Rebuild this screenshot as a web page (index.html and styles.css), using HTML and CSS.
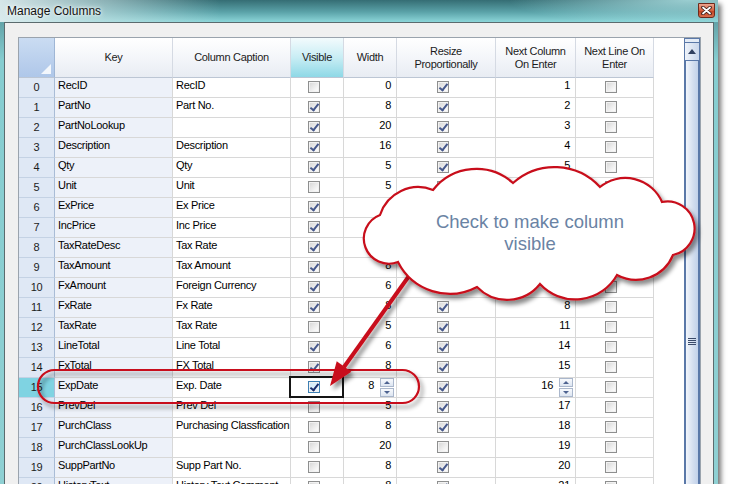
FILE: index.html
```html
<!DOCTYPE html>
<html>
<head>
	<title>Manage Columns</title>
	<link rel="stylesheet" href="styles.css">
</head>
<body>
	<div class="window">
		<div class="titlebar">
			<span class="title">Manage Columns</span>
			<span class="close">
				<svg width="11" height="9" viewBox="0 0 11 9">
					<path d="M2 1.5 L9 7.5 M9 1.5 L2 7.5" stroke="#3b1d16" stroke-width="3.6" stroke-linecap="round"/>
					<path d="M2 1.5 L9 7.5 M9 1.5 L2 7.5" stroke="#fff" stroke-width="1.8" stroke-linecap="round"/>
				</svg>
			</span>
		</div>
		<div class="panel">
			<div class="grid">
				<div class="cells">
					<table>
						<thead>
							<tr>
								<th class="corner w-rh"></th>
								<th class="w-key">Key</th>
								<th class="w-cap">Column Caption</th>
								<th class="w-vis sorted">Visible</th>
								<th class="w-wid">Width</th>
								<th class="w-res">Resize<br>Proportionally</th>
								<th class="w-nc">Next Column<br>On Enter</th>
								<th class="w-nl">Next Line On<br>Enter</th>
							</tr>
						</thead>
						<tbody>
							<tr><td class="rh">0</td><td class="key">RecID</td><td class="cap">RecID</td><td class="chk"><span class="cb"></span></td><td class="num">0</td><td class="chk"><span class="cb on"></span></td><td class="num">1</td><td class="chk"><span class="cb"></span></td></tr>
							<tr><td class="rh">1</td><td class="key">PartNo</td><td class="cap">Part No.</td><td class="chk"><span class="cb on"></span></td><td class="num">8</td><td class="chk"><span class="cb on"></span></td><td class="num">2</td><td class="chk"><span class="cb"></span></td></tr>
							<tr><td class="rh">2</td><td class="key">PartNoLookup</td><td class="cap"></td><td class="chk"><span class="cb on"></span></td><td class="num">20</td><td class="chk"><span class="cb on"></span></td><td class="num">3</td><td class="chk"><span class="cb"></span></td></tr>
							<tr><td class="rh">3</td><td class="key">Description</td><td class="cap">Description</td><td class="chk"><span class="cb on"></span></td><td class="num">16</td><td class="chk"><span class="cb on"></span></td><td class="num">4</td><td class="chk"><span class="cb"></span></td></tr>
							<tr><td class="rh">4</td><td class="key">Qty</td><td class="cap">Qty</td><td class="chk"><span class="cb on"></span></td><td class="num">5</td><td class="chk"><span class="cb on"></span></td><td class="num">5</td><td class="chk"><span class="cb"></span></td></tr>
							<tr><td class="rh">5</td><td class="key">Unit</td><td class="cap">Unit</td><td class="chk"><span class="cb"></span></td><td class="num">5</td><td class="chk"><span class="cb on"></span></td><td class="num"></td><td class="chk"><span class="cb"></span></td></tr>
							<tr><td class="rh">6</td><td class="key">ExPrice</td><td class="cap">Ex Price</td><td class="chk"><span class="cb on"></span></td><td class="num"></td><td class="chk"><span class="cb on"></span></td><td class="num"></td><td class="chk"><span class="cb"></span></td></tr>
							<tr><td class="rh">7</td><td class="key">IncPrice</td><td class="cap">Inc Price</td><td class="chk"><span class="cb on"></span></td><td class="num"></td><td class="chk"><span class="cb on"></span></td><td class="num"></td><td class="chk"><span class="cb"></span></td></tr>
							<tr><td class="rh">8</td><td class="key">TaxRateDesc</td><td class="cap">Tax Rate</td><td class="chk"><span class="cb on"></span></td><td class="num"></td><td class="chk"><span class="cb on"></span></td><td class="num"></td><td class="chk"><span class="cb"></span></td></tr>
							<tr><td class="rh">9</td><td class="key">TaxAmount</td><td class="cap">Tax Amount</td><td class="chk"><span class="cb on"></span></td><td class="num">8</td><td class="chk"><span class="cb on"></span></td><td class="num"></td><td class="chk"><span class="cb"></span></td></tr>
							<tr><td class="rh">10</td><td class="key">FxAmount</td><td class="cap">Foreign Currency</td><td class="chk"><span class="cb on"></span></td><td class="num">6</td><td class="chk"><span class="cb on"></span></td><td class="num"></td><td class="chk"><span class="cb"></span></td></tr>
							<tr><td class="rh">11</td><td class="key">FxRate</td><td class="cap">Fx Rate</td><td class="chk"><span class="cb on"></span></td><td class="num">8</td><td class="chk"><span class="cb on"></span></td><td class="num">8</td><td class="chk"><span class="cb"></span></td></tr>
							<tr><td class="rh">12</td><td class="key">TaxRate</td><td class="cap">Tax Rate</td><td class="chk"><span class="cb"></span></td><td class="num">5</td><td class="chk"><span class="cb on"></span></td><td class="num">11</td><td class="chk"><span class="cb"></span></td></tr>
							<tr><td class="rh">13</td><td class="key">LineTotal</td><td class="cap">Line Total</td><td class="chk"><span class="cb on"></span></td><td class="num">6</td><td class="chk"><span class="cb on"></span></td><td class="num">14</td><td class="chk"><span class="cb"></span></td></tr>
							<tr><td class="rh">14</td><td class="key">FxTotal</td><td class="cap">FX Total</td><td class="chk"><span class="cb on"></span></td><td class="num">8</td><td class="chk"><span class="cb on"></span></td><td class="num">15</td><td class="chk"><span class="cb"></span></td></tr>
							<tr>
								<td class="rh sel">15</td><td class="key">ExpDate</td><td class="cap">Exp. Date</td>
								<td class="chk cur"><span class="cb on focus"></span></td>
								<td class="num spin"><div class="spin-wrap"><span class="spin-val">8</span><span class="spinner"><i class="up"></i><i class="down"></i></span></div></td>
								<td class="chk"><span class="cb on"></span></td>
								<td class="num spin"><div class="spin-wrap"><span class="spin-val">16</span><span class="spinner"><i class="up"></i><i class="down"></i></span></div></td>
								<td class="chk"><span class="cb"></span></td>
							</tr>
							<tr><td class="rh">16</td><td class="key">PrevDel</td><td class="cap">Prev Del</td><td class="chk"><span class="cb"></span></td><td class="num">5</td><td class="chk"><span class="cb on"></span></td><td class="num">17</td><td class="chk"><span class="cb"></span></td></tr>
							<tr><td class="rh">17</td><td class="key">PurchClass</td><td class="cap">Purchasing Classfication</td><td class="chk"><span class="cb"></span></td><td class="num">8</td><td class="chk"><span class="cb on"></span></td><td class="num">18</td><td class="chk"><span class="cb"></span></td></tr>
							<tr><td class="rh">18</td><td class="key">PurchClassLookUp</td><td class="cap"></td><td class="chk"><span class="cb"></span></td><td class="num">20</td><td class="chk"><span class="cb"></span></td><td class="num">19</td><td class="chk"><span class="cb"></span></td></tr>
							<tr><td class="rh">19</td><td class="key">SuppPartNo</td><td class="cap">Supp Part No.</td><td class="chk"><span class="cb"></span></td><td class="num">8</td><td class="chk"><span class="cb on"></span></td><td class="num">20</td><td class="chk"><span class="cb"></span></td></tr>
							<tr><td class="rh">20</td><td class="key">HistoryText</td><td class="cap">History Text Comment</td><td class="chk"><span class="cb"></span></td><td class="num">8</td><td class="chk"><span class="cb on"></span></td><td class="num">21</td><td class="chk"><span class="cb"></span></td></tr>
						</tbody>
					</table>
				</div>
				<div class="vscroll">
					<div class="sb-cap"></div>
					<div class="sb-up"><span class="tri"></span></div>
					<div class="sb-thumb"><span class="grip"></span></div>
				</div>
			</div>
		</div>
	</div>

	<!-- annotations drawn over the dialog -->
	<svg class="notes" width="733" height="500" viewBox="0 0 733 500">
		<defs>
			<filter id="shadow" x="-10%" y="-10%" width="130%" height="140%">
				<feDropShadow dx="3" dy="4" stdDeviation="2.2" flood-color="#000" flood-opacity="0.45"/>
			</filter>
		</defs>
		<rect x="38" y="370" width="381" height="33" rx="16.5" class="red-line" filter="url(#shadow)"/>
		<g filter="url(#shadow)">
			<line x1="409" y1="276" x2="344" y2="367" class="arrow-line"/>
			<polygon points="330,386 351.3,371.7 336.7,361.2" class="arrow-head"/>
		</g>
		<path class="cloud" filter="url(#shadow)" d="M433,190 A55,55 0 0 1 513,183 A62,62 0 0 1 600,187 A40,40 0 0 1 662,202 A27,27 0 0 1 673,255 A40,40 0 0 1 617,275 A48,48 0 0 1 540,284 A42,42 0 0 1 477,287 A58,58 0 0 1 398,262 A25,25 0 0 1 380,215 A40,40 0 0 1 433,190 Z"/>
		<text x="530" y="228" class="cloud-text">Check to make column</text>
		<text x="530" y="250" class="cloud-text">visible</text>
	</svg>
</body>
</html>
```
FILE: styles.css
```css
/* Win7 style "Manage Columns" dialog */

* { box-sizing: border-box; }

body {
	margin: 0;
	background: #fff;
	font-family: "Liberation Sans", Arial, sans-serif;
}

.window {
	width: 718px;
	height: 484px;
	display: flex;
	flex-direction: column;
	background: linear-gradient(#4f8c92, #86cdd0 60px, #8fd0d3);
	box-shadow: 3px 4px 5px rgba(0, 0, 0, 0.55);
}

.titlebar {
	height: 22px;
	flex: none;
	display: flex;
	align-items: flex-start;
	justify-content: space-between;
	padding-left: 7px;
	background:
		radial-gradient(ellipse 180px 26px at 96% 0, rgba(180, 230, 232, 0.8), rgba(180, 230, 232, 0)),
		linear-gradient(to right, rgba(222, 236, 238, 0.95) 0, rgba(205, 228, 230, 0.55) 110px, rgba(205, 228, 230, 0) 220px),
		linear-gradient(#356d74, #5ba3a9 55%, #8cd6d9);
}

.title {
	font-size: 12px;
	line-height: 22px;
	color: #111;
	text-shadow: 0 0 6px #fff, 0 0 3px #fff;
}

.close {
	margin: 3px 3px 0 0;
	width: 17px;
	height: 15px;
	border: 1px solid #6e2a1c;
	border-radius: 0 0 3px 3px;
	background: linear-gradient(#eca48f, #d6613f 50%, #c1401f 52%, #d9704f);
	display: flex;
	align-items: center;
	justify-content: center;
}

.panel {
	flex: 1;
	margin: 0 4px;
	background: #f0f0f0;
	border: 1px solid #5b6b6e;
	border-bottom: none;
	padding: 14px 0 0 13px;
	overflow: hidden;
}

.grid {
	display: flex;
	width: 683px;
	height: 470px;
	border: 1px solid #9aa3ad;
	background: #fff;
}

.cells { width: 665px; }

table {
	border-collapse: separate;
	border-spacing: 0;
	table-layout: fixed;
	width: 635px;
	font-size: 11px;
	letter-spacing: -0.3px;
	color: #000;
}

th, td {
	border-right: 1px solid #d8d8d8;
	border-bottom: 1px solid #d8d8d8;
	padding: 0;
	overflow: hidden;
	white-space: nowrap;
}

.w-rh { width: 36px; }
.w-key { width: 118px; }
.w-cap { width: 118px; }
.w-vis { width: 53px; }
.w-wid { width: 53px; }
.w-res { width: 99px; }
.w-nc { width: 80px; }
.w-nl { width: 78px; }

thead th {
	height: 40px;
	background: linear-gradient(#fff, #f4f6fa 50%, #e8ecf3);
	border-right-color: #d5dae3;
	border-bottom-color: #bcc6d4;
	font-weight: normal;
	line-height: 13px;
	text-align: center;
	vertical-align: middle;
	color: #1b1b1b;
}

th.corner {
	position: relative;
	background: linear-gradient(#cadcf2, #afc7e9);
	border-right-color: #9fb6d5;
}

th.corner::after {
	content: '';
	position: absolute;
	right: 3px;
	bottom: 3px;
	border-left: 10px solid transparent;
	border-bottom: 10px solid #f3f7fc;
}

th.sorted { background: linear-gradient(#f3fbfd, #c8edf4 50%, #8ed8e6); }

tbody td {
	height: 20px;
	line-height: 14px;
	vertical-align: top;
}

td.rh {
	background: #dfe8f5;
	text-align: center;
	padding-top: 2px;
	border-right-color: #a9bcd6;
	border-bottom-color: #c4d2e4;
	color: #1c1c1c;
}

td.rh.sel { background: #7fd3e2; }

td.key {
	background: #edf1f9;
	padding-left: 3px;
}

td.cap { padding-left: 3px; }

td.num {
	text-align: right;
	padding-right: 5px;
}

td.chk { padding: 3px 7px 0 0; }

.cb {
	display: block;
	position: relative;
	margin: 0 auto;
	width: 12px;
	height: 12px;
	border: 1px solid #8e8f8f;
	background: linear-gradient(135deg, #d4d4d4, #f5f5f5 70%, #fff);
	box-shadow: inset 0 0 0 1px #f2f2f2;
}

.cb.on::after {
	content: '';
	position: absolute;
	left: 3px;
	top: 0;
	width: 3px;
	height: 7px;
	border: solid #46588c;
	border-width: 0 2px 2px 0;
	transform: rotate(38deg);
}

.cb.focus {
	border-color: #3d7fb3;
	background: linear-gradient(135deg, #cfe8f8, #eef8fe);
}

.cb.focus::after { border-color: #1b2c6c; }

/* current cell */
td.cur {
	position: relative;
	overflow: visible;
}

td.cur::after {
	content: '';
	position: absolute;
	left: -2px;
	top: -2px;
	right: -1px;
	bottom: -1px;
	border: 2px solid #151515;
}

td.spin { padding-right: 2px; }

.spin-wrap {
	display: flex;
	justify-content: flex-end;
	align-items: flex-start;
}

.spin-val { margin-right: 6px; }

.spinner {
	width: 14px;
	height: 19px;
	display: flex;
	flex-direction: column;
	gap: 1px;
}

.spinner i {
	flex: 1;
	border: 1px solid #aab7cc;
	background: linear-gradient(#f8fafd, #dde5f1);
	display: flex;
	align-items: center;
	justify-content: center;
}

.spinner i::after {
	content: '';
	border-left: 3px solid transparent;
	border-right: 3px solid transparent;
}

.spinner .up::after { border-bottom: 3px solid #4d6290; }
.spinner .down::after { border-top: 3px solid #4d6290; }

/* vertical scrollbar */
.vscroll {
	width: 16px;
	display: flex;
	flex-direction: column;
	background: #e8eef7;
}

.sb-cap {
	height: 5px;
	border: 1px solid #5a78a8;
	background: #e3ebf6;
}

.sb-up {
	height: 18px;
	border: 1px solid #5a78a8;
	border-top: none;
	background: linear-gradient(to right, #eef3fa, #c9d6eb);
	display: flex;
	align-items: center;
	justify-content: center;
}

.tri {
	border-left: 4px solid transparent;
	border-right: 4px solid transparent;
	border-bottom: 5px solid #2f3f5f;
}

.sb-thumb {
	flex: 1;
	display: flex;
	flex-direction: column;
	align-items: center;
	padding-top: 277px;
	border-left: 2px solid #5a78a8;
	border-right: 2px solid #5a78a8;
	background: linear-gradient(to right, #f1f5fb, #d3deef 60%, #c1d1ea);
}

.grip {
	width: 8px;
	height: 7px;
	background: repeating-linear-gradient(#3a4a6a 0 1px, transparent 1px 2px);
}

/* annotations */
.notes {
	position: absolute;
	left: 0;
	top: 0;
	pointer-events: none;
}

.red-line {
	fill: none;
	stroke: #c8101a;
	stroke-width: 2.2;
}

.arrow-line {
	stroke: #c8101a;
	stroke-width: 4;
}

.arrow-head { fill: #c8101a; }

.cloud {
	fill: #fff;
	stroke: #c8101a;
	stroke-width: 2.2;
}

.cloud-text {
	font-family: "Liberation Sans", Arial, sans-serif;
	font-size: 18.5px;
	fill: #6a83a4;
	text-anchor: middle;
}
```
